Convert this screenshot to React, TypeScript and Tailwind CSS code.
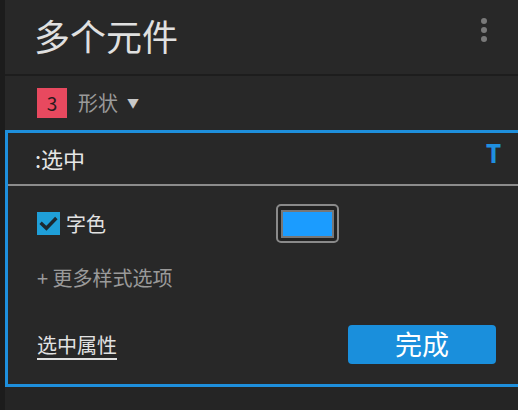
const font = { fontFamily: '"Noto Sans CJK SC", "Noto Sans", sans-serif' };

function Dots() {
  return (
    <div className="flex flex-col gap-[3px] pt-[18px] pr-[31px]">
      <span className="h-[6px] w-[6px] rounded-full bg-[#7a7a7a]" />
      <span className="h-[6px] w-[6px] rounded-full bg-[#7a7a7a]" />
      <span className="h-[6px] w-[6px] rounded-full bg-[#7a7a7a]" />
    </div>
  );
}

function Checkbox() {
  return (
    <span className="flex h-[23px] w-[23px] items-center justify-center bg-[#1f9fd8]">
      <svg width="19" height="19" viewBox="0 0 20 20">
        <path d="M3 10.5 L7.8 15 L17 5.5" fill="none" stroke="#1c2830" strokeWidth="3.6" strokeLinecap="square" />
      </svg>
    </span>
  );
}

export default function App() {
  return (
    <div className="flex h-[410px] w-[518px] overflow-hidden bg-[#282828] text-[#dcdcdc]" style={font}>
      <div className="w-[5px] shrink-0 bg-[#1c1c1c]" />
      <div className="flex min-w-0 flex-1 flex-col">
        <header className="flex h-[74px] items-start justify-between">
          <h1 className="pl-[29px] pt-[10px] text-[36px] leading-[50px] text-[#e0e0e0]">多个元件</h1>
          <Dots />
        </header>
        <div className="h-[2px] bg-[#1d1d1d]" />
        <div className="flex h-[54px] items-center gap-[11px] pl-[32px]">
          <span className="flex h-[30px] w-[30px] items-center justify-center bg-[#e8495f] text-[19px] text-[#2a1a1c]">3</span>
          <span className="text-[20px] text-[#9a9a9a]">形状</span>
          <span className="-ml-[2px] text-[12px] text-[#c8c8c8]">▼</span>
        </div>

        <section className="flex h-[257px] flex-col border-[3px] border-r-0 border-[#1e8fdc]">
          <div className="flex h-[51px] items-center justify-between pl-[27px] pr-[17px]">
            <span className="text-[22px] text-[#e6e6e6]">:选中</span>
            <span className="pb-[12px] text-[26px] font-bold leading-none text-[#1f8fe0]" style={{ fontFamily: '"Open Sans", sans-serif' }}>T</span>
          </div>
          <div className="h-[2px] bg-[#8c8c8c]" />
          <div className="flex flex-1 flex-col pl-[29px]">
            <div className="mt-[18px] flex h-[39px] items-center">
              <Checkbox />
              <span className="ml-[6px] w-[210px] text-[20px] text-[#e2e2e2]">字色</span>
              <span className="flex h-[39px] w-[63px] items-center justify-center rounded-[5px] border-2 border-[#8a8a8a] bg-[#222]">
                <span className="h-[28px] w-[53px] border-2 border-[#777] bg-[#1b9cff]" />
              </span>
            </div>
            <div className="mt-[20px] text-[20px] leading-[30px] text-[#9a9a9a]">+ 更多样式选项</div>
            <div className="mt-[32px] flex items-center justify-between pr-[22px]">
              <span className="text-[20px] text-[#e2e2e2] underline underline-offset-[5px] decoration-[2px]">选中属性</span>
              <button className="h-[39px] w-[148px] rounded-[4px] bg-[#1a8fdc] pb-[2px] text-[27px] leading-none text-white">完成</button>
            </div>
          </div>
        </section>
        <div className="flex-1 bg-[#252525]" />
      </div>
    </div>
  );
}
